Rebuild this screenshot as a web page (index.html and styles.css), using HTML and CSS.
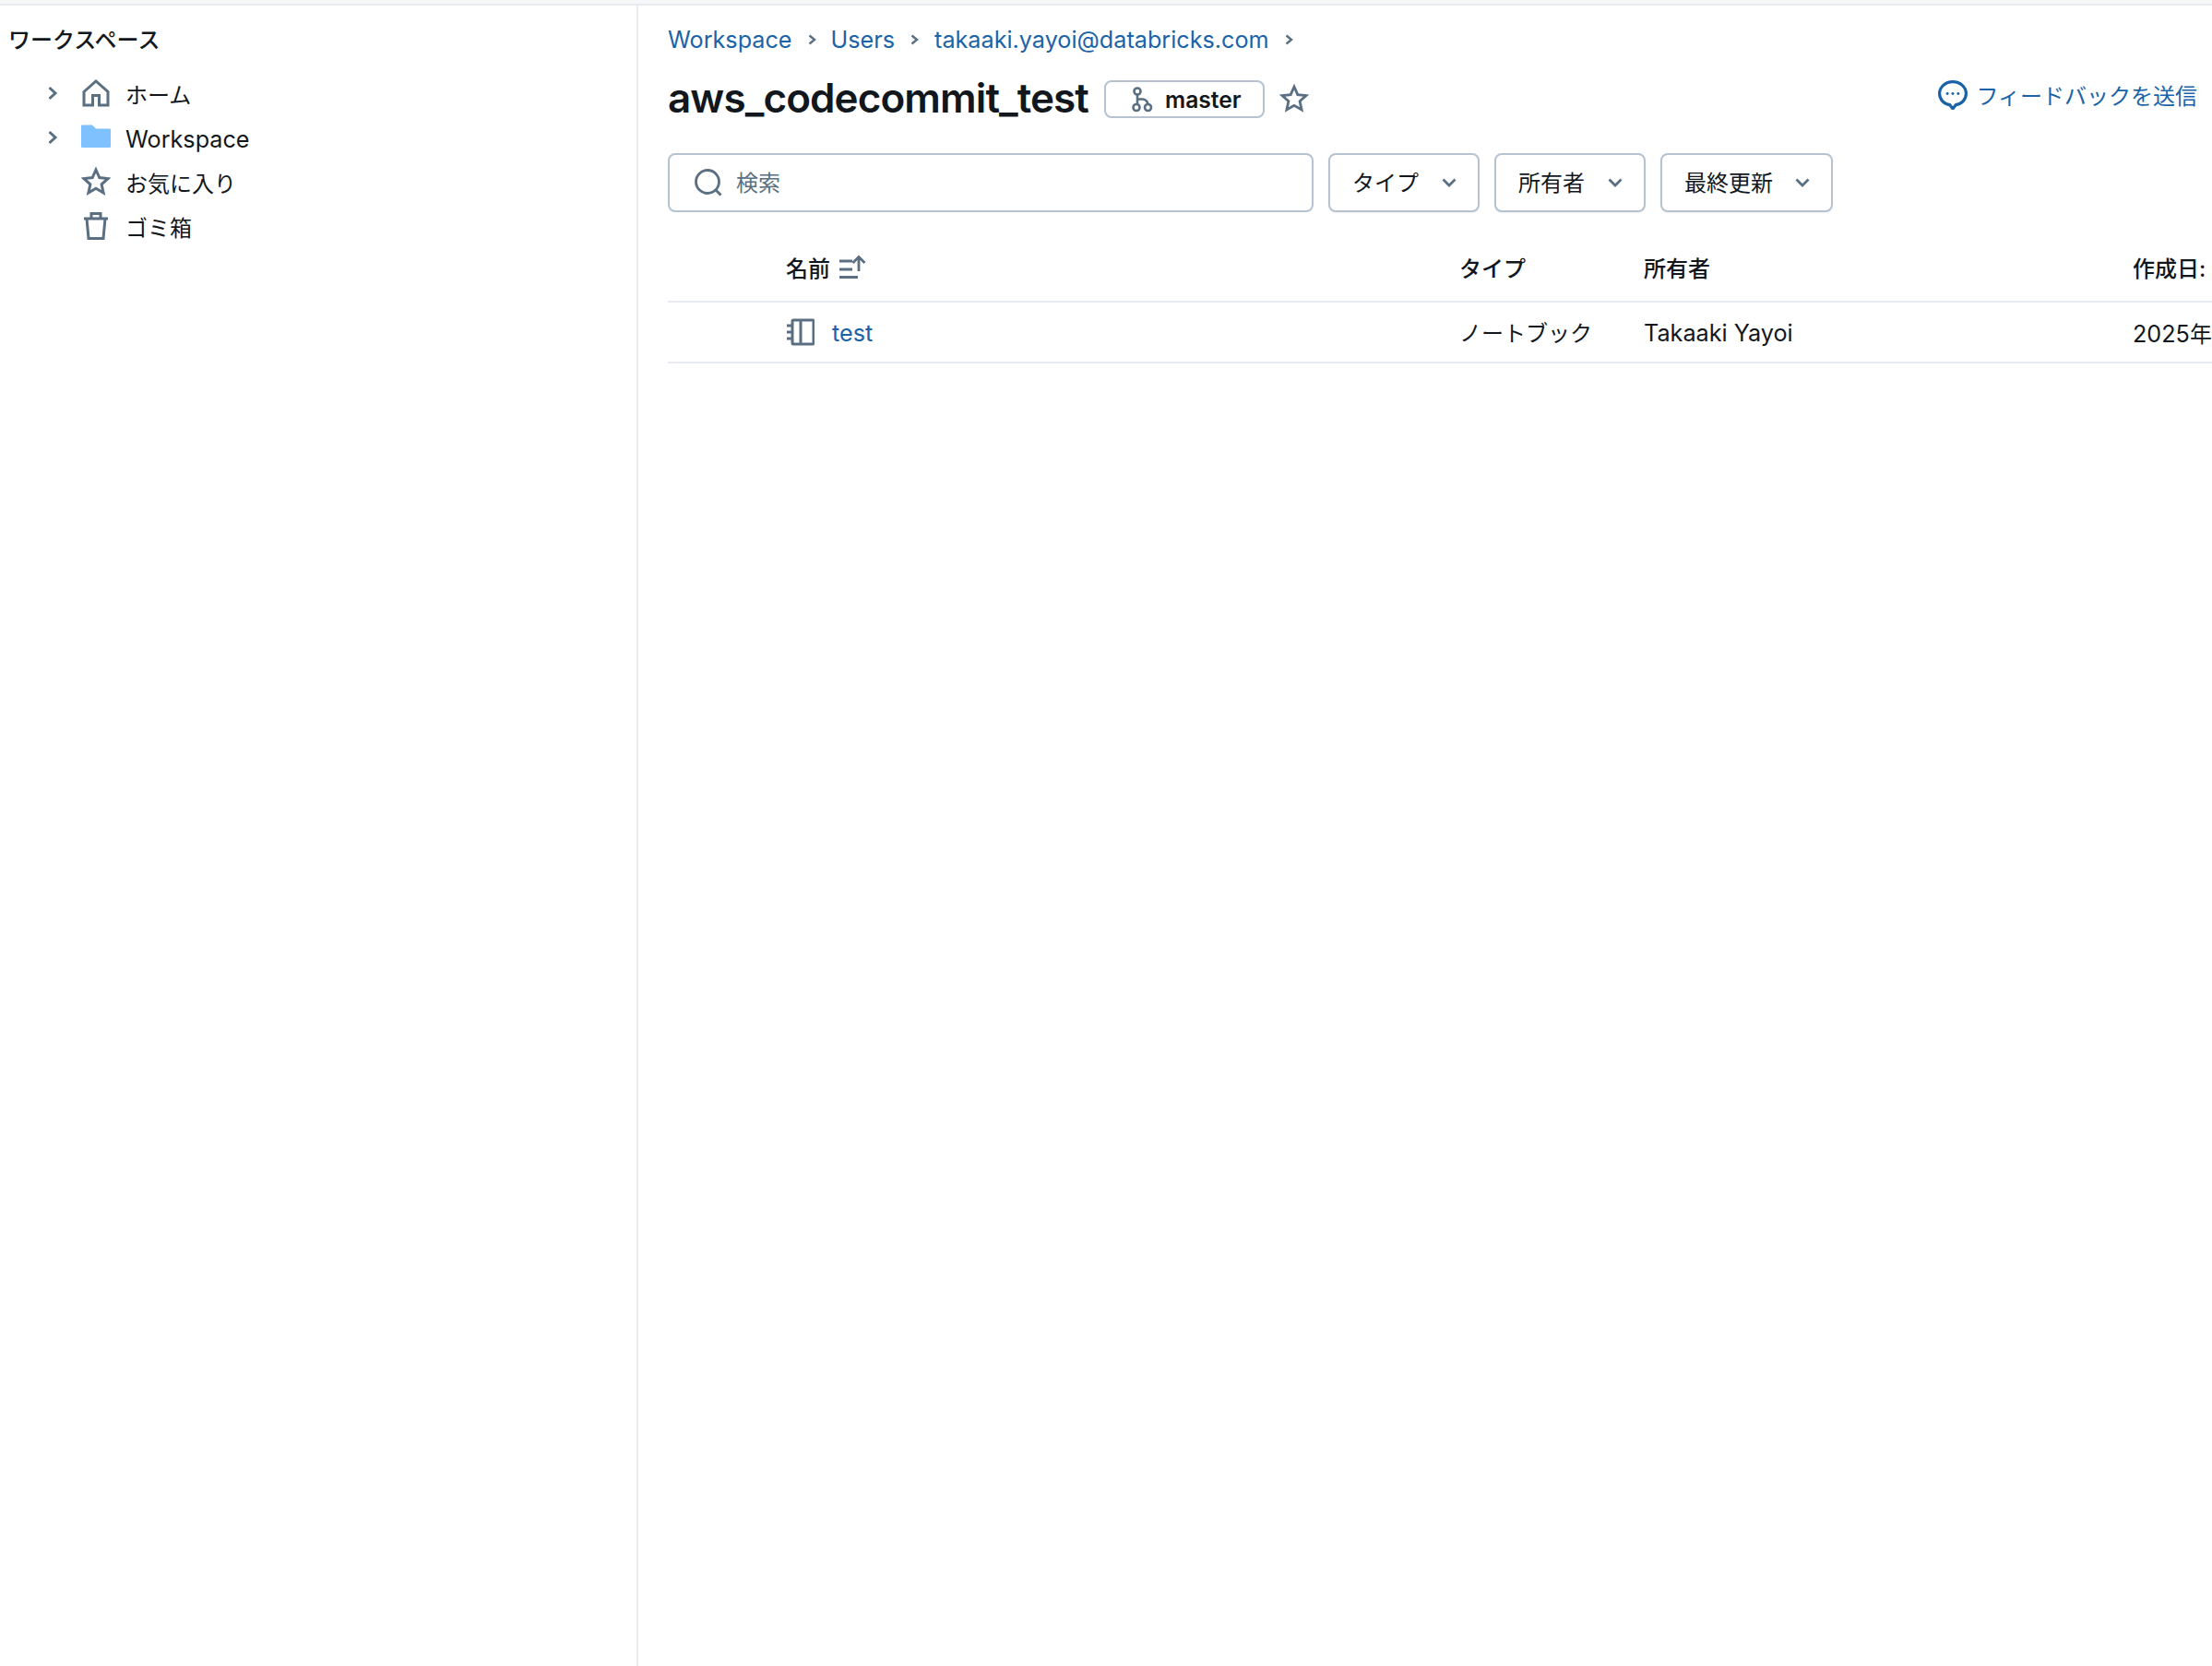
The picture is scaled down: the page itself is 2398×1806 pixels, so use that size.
FILE: index.html
```html
<!DOCTYPE html>
<html lang="ja">
<head>
<meta charset="utf-8">
<title>aws_codecommit_test</title>
<link rel="stylesheet" href="styles.css">
</head>
<body>
<div class="topstrip"></div>
<div class="app">
  <aside class="sidebar">
    <div class="side-title">ワークスペース</div>
    <ul class="tree">
      <li class="tree-row">
        <svg class="chev" viewBox="0 0 12 16"><path d="M2.500 2 9 8l-6.500 6"/></svg>
        <svg class="ticon" viewBox="0 0 32 32"><path d="M3 14.500 16 3l13 11.500V29H19.500V18.500h-7V29H3z"/></svg>
        <span>ホーム</span>
      </li>
      <li class="tree-row">
        <svg class="chev" viewBox="0 0 12 16"><path d="M2.500 2 9 8l-6.500 6"/></svg>
        <svg class="ticon folder" viewBox="0 0 32 32"><path d="M0 3.500a1 1 0 0 1 1-1h11l4 4h15a1 1 0 0 1 1 1V26a1 1 0 0 1-1 1H1a1 1 0 0 1-1-1z"/></svg>
        <span class="en tree-en">Workspace</span>
      </li>
      <li class="tree-row">
        <span class="chev-space"></span>
        <svg class="ticon" viewBox="0 0 32 32"><path d="m16 3 3.800 8.600 9.200 1-6.900 6.200 2 9.200-8.100-4.700L7.900 28l2-9.200L3 12.600l9.200-1z"/></svg>
        <span>お気に入り</span>
      </li>
      <li class="tree-row">
        <span class="chev-space"></span>
        <svg class="ticon" viewBox="0 0 32 32"><path d="M3 8h26M6 8l2 21.500h16L26 8M11 8V2.500h10V8"/></svg>
        <span>ゴミ箱</span>
      </li>
    </ul>
  </aside>
  <main class="main">
    <nav class="crumbs en">
      <a>Workspace</a><svg class="sep" viewBox="0 0 12 16"><path d="M3.500 3.500 9 8l-5.500 4.500"/></svg>
      <a>Users</a><svg class="sep" viewBox="0 0 12 16"><path d="M3.500 3.500 9 8l-5.500 4.500"/></svg>
      <a class="crumb-mail">takaaki.yayoi@databricks.com</a><svg class="sep" viewBox="0 0 12 16"><path d="M3.500 3.500 9 8l-5.500 4.500"/></svg>
    </nav>
    <header class="head">
      <h1>aws_codecommit_test</h1>
      <button class="branch">
        <svg class="branch-icon" viewBox="0 0 24 28"><circle cx="7" cy="5" r="3.500"/><circle cx="6" cy="22.500" r="3.500"/><circle cx="18.500" cy="22.500" r="3.500"/><path d="M7 8.500V19M7 13.500h5a6 6 0 0 1 6.500 5.500"/></svg>
        <span class="master">master</span>
      </button>
      <svg class="head-star" viewBox="0 0 32 32"><path d="m16 3 3.800 8.600 9.200 1-6.900 6.200 2 9.200-8.100-4.700L7.900 28l2-9.200L3 12.600l9.200-1z"/></svg>
      <a class="feedback">
        <svg class="fb-icon" viewBox="1 1 30 30"><path d="M16 2.500C8.500 2.500 2.500 8 2.500 14.500c0 6 4.500 10.500 10.500 11.500l3 4 3-4c6-1 10.500-5.500 10.500-11.500C29.500 8 23.500 2.500 16 2.500z"/><g class="fb-dots"><circle cx="10.500" cy="14.500" r="1.400"/><circle cx="16" cy="14.500" r="1.400"/><circle cx="21.500" cy="14.500" r="1.400"/></g></svg>
        <span>フィードバックを送信</span>
      </a>
    </header>
    <div class="filters">
      <div class="search">
        <svg class="search-icon" viewBox="0 0 32 32"><circle cx="15" cy="15" r="12.500"/><path d="m24 24 5.500 5.500"/></svg>
        <span class="lift">検索</span>
      </div>
      <button class="filter"><span class="lift">タイプ</span><svg class="down" viewBox="0 0 18 14"><path d="M2.500 3.500 9 10l6.500-6.500"/></svg></button>
      <button class="filter"><span class="lift">所有者</span><svg class="down" viewBox="0 0 18 14"><path d="M2.500 3.500 9 10l6.500-6.500"/></svg></button>
      <button class="filter"><span class="lift">最終更新</span><svg class="down" viewBox="0 0 18 14"><path d="M2.500 3.500 9 10l6.500-6.500"/></svg></button>
    </div>
    <div class="table">
      <div class="row row-head">
        <div class="cell-name name-head"><span>名前</span>
          <svg class="sort" viewBox="0 0 30 26"><path d="M0 7h14M0 16h14M0 24.500h20"/><path d="M21 18V2M14.500 9 21 2.500 27.500 9"/></svg>
        </div>
        <div class="cell-type">タイプ</div>
        <div class="cell-owner">所有者</div>
        <div class="cell-date">作成日:</div>
      </div>
      <div class="row row-body">
        <div class="cell-name">
          <svg class="nb" viewBox="0 0 30 30"><rect x="6" y="2" width="23" height="26" rx="1"/><path d="M15 2v26M0 8h6M0 15h6M0 22h6"/></svg>
          <a class="link en">test</a>
        </div>
        <div class="cell-type lift">ノートブック</div>
        <div class="cell-owner en">Takaaki Yayoi</div>
        <div class="cell-date date-val"><span class="en">2025</span>年</div>
      </div>
    </div>
  </main>
</div>
</body>
</html>
```
FILE: styles.css
```css
* { box-sizing: border-box; }
html, body { margin: 0; height: 100%; }
body {
  width: 2398px;
  height: 1806px;
  overflow: hidden;
  background: #fff;
  color: #11171c;
  font-family: Inter, "Noto Sans CJK JP", sans-serif;
  font-size: 24px;
  display: flex;
  flex-direction: column;
}
.en { font-size: 25.2px; }
.lift { margin-bottom: 3px; }
svg { display: block; fill: none; stroke: #5a6f81; stroke-width: 2.8; flex: none; }
a { color: #1a63a8; }
button { font: inherit; color: inherit; background: #fff; }

.topstrip { height: 6px; background: #f6f7f9; border-bottom: 2px solid #e8ecf0; flex: none; }
.app { flex: 1; display: flex; min-height: 0; }

.sidebar { width: 692px; flex: none; border-right: 2px solid #e8ecf0; padding: 23px 0 0 9px; }
.side-title { line-height: 30px; font-weight: 500; }
.tree { list-style: none; margin: 18px 0 0; padding: 0 0 0 42px; }
.tree-row { height: 48px; display: flex; align-items: center; }
.tree-en { margin-top: 3px; }
.chev { width: 12px; height: 16px; stroke-width: 3; }
.chev-space { width: 12px; height: 16px; }
.ticon { width: 32px; height: 32px; margin: 0 16px 0 25px; stroke-width: 3; }
.folder { fill: #7fc1ff; stroke: none; }

.main { flex: 1; min-width: 0; padding: 22px 0 0 32px; overflow: hidden; }
.crumbs { display: flex; align-items: center; height: 30px; color: #1a63a8; }
.crumb-mail { margin-left: 1px; }
.sep { width: 12px; height: 16px; margin: 0 15px; stroke-width: 2.4; }

.head { display: flex; align-items: center; height: 60px; margin-top: 18px; padding-right: 16px; }
h1 { margin: 0; font-size: 44px; font-weight: 600; letter-spacing: -0.9px; line-height: 60px; }
.branch {
  display: flex; align-items: center; gap: 13px;
  width: 174px; height: 41px; margin: 3px 0 0 17px; padding: 0 0 0 27px;
  border: 2px solid #b5c3d0; border-radius: 8px;
  font-weight: 600;
}
.master { font-size: 24.6px; }
.branch-icon { width: 24px; height: 28px; stroke-width: 2.6; }
.head-star { width: 32px; height: 32px; margin: 1px 0 0 16px; }
.feedback { margin: -7px 0 0 auto; display: flex; align-items: center; gap: 9px; }
.fb-icon { width: 32px; height: 32px; stroke: #1a63a8; stroke-width: 3; }
.fb-dots circle { fill: #1a63a8; stroke: none; }

.filters { display: flex; gap: 16px; margin-top: 30px; }
.search {
  width: 700px; height: 64px; display: flex; align-items: center; gap: 14px;
  padding-left: 26px;
  border: 2px solid #b5c3d0; border-radius: 8px;
  color: #5a6f81;
}
.search-icon { width: 32px; height: 32px; }
.filter {
  height: 64px; display: flex; align-items: center; justify-content: space-between;
  padding: 0 22px 0 24px;
  border: 2px solid #b5c3d0; border-radius: 8px;
  box-shadow: 0 1px 2px rgba(0,0,0,.06);
}
.filter:nth-of-type(1) { width: 164px; }
.filter:nth-of-type(2) { width: 164px; }
.filter:nth-of-type(3) { width: 187px; }
.down { width: 18px; height: 14px; }

.table { margin-top: 32px; width: 1800px; }
.row { display: flex; align-items: center; padding-left: 128px; border-bottom: 2px solid #e8ecf0; }
.row-head { height: 66px; padding-bottom: 10px; font-weight: 500; }
.row-body { height: 66px; padding-top: 2px; }
.cell-name { width: 730px; display: flex; align-items: center; }
.name-head { gap: 10px; }
.cell-type { width: 200px; }
.cell-owner { width: 530px; }
.cell-date { white-space: nowrap; }
.date-val { margin-bottom: 2px; }
.sort { width: 30px; height: 26px; }
.nb { width: 30px; height: 30px; margin: 0 19px 2px 1px; stroke-width: 3; }
.link { color: #1a63a8; }
```
